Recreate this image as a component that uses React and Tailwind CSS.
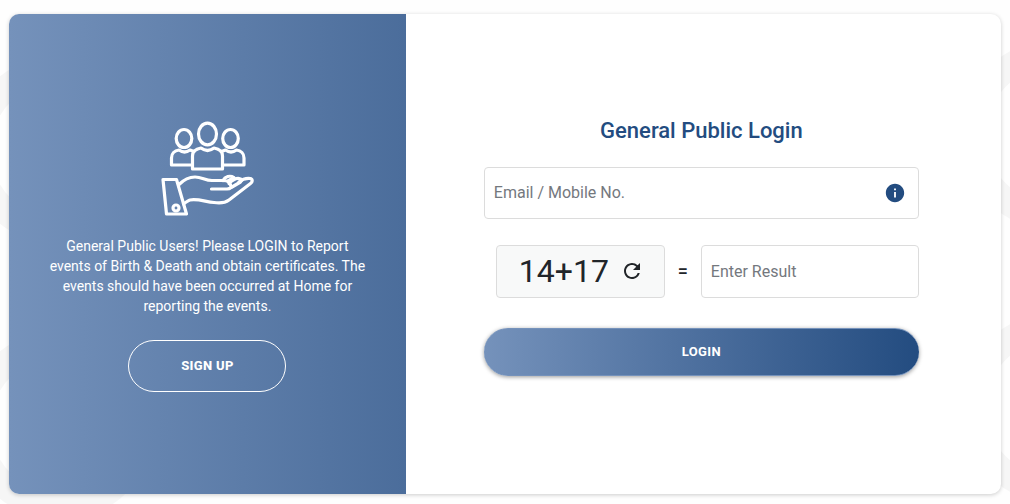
import React, { useState } from "react";
import { MdInfo, MdRefresh } from "react-icons/md";

function UsersInHandIcon() {
  return (
    <svg
      className="h-24 w-24"
      viewBox="0 0 96 96"
      fill="none"
      stroke="currentColor"
      strokeWidth="3.2"
      strokeLinejoin="round"
      strokeLinecap="round"
      aria-hidden="true"
    >
      {/* People */}
      <ellipse cx="25" cy="18.500" rx="7.8" ry="9" />
      <ellipse cx="71.500" cy="18.500" rx="7.8" ry="9" />
      <ellipse cx="48.500" cy="14" rx="9" ry="10.800" />
      <path d="M32 45H12.500V38c0-4.500 3-7.500 7.500-8q5.500 4 11 0l4 1.500" />
      <path d="M65 45h20V38c0-4.500-3-7.500-7.500-8q-5.500 4-11 0l-4 1.500" />
      <path d="M33.500 49V36c0-4 3-7 8.500-8q6.500 5 13 0c5.500 1 8.500 4 8.500 8v13z" />
      {/* Cuff and hand */}
      <path d="M4 59.500h13.500L27.500 94H7.500z" />
      <circle cx="17" cy="88" r="3" />
      <path d="M20 64.500c5-5 10-7.500 16-7.500 7 0 10 3.500 17 3.500h11c5 0 8 3 8 7-1 1-2 1.500-4 1.500H52.500" />
      <path d="M64 60.500c2-4 7-5.500 11-3l-6 3.500" />
      <path d="M70 63.500c3-3 6-5.500 10-5 3 .5 3.500 2 1.500 3.500L73 67" />
      <path d="M80 62c3-2.500 8-4 11.500-3.500 2.500 1 2 3.500 0 5L70 80c-4 3-9 3.500-15 2.500-9-1-17-4-24-2.500-2 .500-4 2-6.500 4" />
    </svg>
  );
}

// Faint rings that show around the card
function PageBackdrop() {
  return (
    <svg
      className="absolute inset-0 h-full w-full"
      fill="none"
      stroke="#f6f6f6"
      strokeWidth="26"
      aria-hidden="true"
    >
      <circle cx="60" cy="150" r="82" />
      <circle cx="60" cy="425" r="82" />
      <svg x="100%" overflow="visible">
        <circle cx="45" cy="135" r="82" />
        <circle cx="45" cy="408" r="82" />
      </svg>
    </svg>
  );
}

export default function App() {
  const [login, setLogin] = useState("");
  const [result, setResult] = useState("");

  return (
    <div className="relative min-h-screen bg-[#fefefe] pt-3.5 pr-[9px] pb-2.5 pl-[9px] font-['Roboto',sans-serif]">
      <PageBackdrop />
      <main className="relative flex min-h-[480px] overflow-hidden rounded-[10px] bg-white shadow-[0_1px_4px_rgba(0,0,0,0.2)]">
        {/* Sign up panel */}
        <section className="flex w-2/5 shrink-0 flex-col items-center justify-center bg-linear-to-r from-[#7592bb] to-[#4b6d9b] px-9 pt-1 text-center text-white">
          <UsersInHandIcon />
          <p className="mt-5 text-sm leading-5">
            General Public Users! Please LOGIN to Report events of Birth &amp;
            Death and obtain certificates. The events should have been occurred
            at Home for reporting the events.
          </p>
          <button
            type="button"
            className="mt-6 h-[52px] w-[158px] rounded-full border border-white text-[13px] font-extrabold tracking-wide"
          >
            SIGN UP
          </button>
        </section>

        {/* Login form */}
        <form
          className="flex min-w-0 flex-1 flex-col justify-center pr-[82px] pb-4 pl-[78px]"
          onSubmit={(e) => e.preventDefault()}
        >
          <h1 className="text-center text-[22px] leading-7 font-medium text-[#234c80]">
            General Public Login
          </h1>

          <div className="mt-[22px] flex h-[52px] items-center rounded border border-[#dcdcdc] pr-3">
            <input
              type="text"
              aria-label="Email / Mobile No."
              placeholder="Email / Mobile No."
              className="h-full min-w-0 flex-1 px-[9px] text-base outline-none placeholder:text-[#74787e]"
              value={login}
              onChange={(e) => setLogin(e.target.value)}
            />
            <button type="button" aria-label="Login help" className="text-[#234c80]">
              <MdInfo size={22} />
            </button>
          </div>

          <div className="mt-[26px] flex items-center pl-3">
            <div className="flex h-[53px] w-[169px] items-center justify-between rounded border border-[#dcdcdc] bg-[#f8f9f9] pr-5 pl-[22px] text-[#212529]">
              <span className="text-[32px] leading-10">14+17</span>
              <button type="button" aria-label="Refresh captcha">
                <MdRefresh size={24} />
              </button>
            </div>
            <span className="w-9 text-center text-lg font-medium text-[#212529]">=</span>
            <input
              type="text"
              aria-label="Enter Result"
              placeholder="Enter Result"
              className="h-[53px] min-w-0 flex-1 rounded border border-[#dcdcdc] px-[9px] text-base outline-none placeholder:text-[#74787e]"
              value={result}
              onChange={(e) => setResult(e.target.value)}
            />
          </div>

          <button
            type="submit"
            className="mt-[30px] h-12 rounded-full border-y border-[#7592bb] bg-linear-to-r from-[#7592bb] to-[#234c80] text-[13px] font-bold tracking-wide text-white shadow-[0_1px_4px_rgba(0,0,0,0.4)]"
          >
            LOGIN
          </button>
        </form>
      </main>
    </div>
  );
}
